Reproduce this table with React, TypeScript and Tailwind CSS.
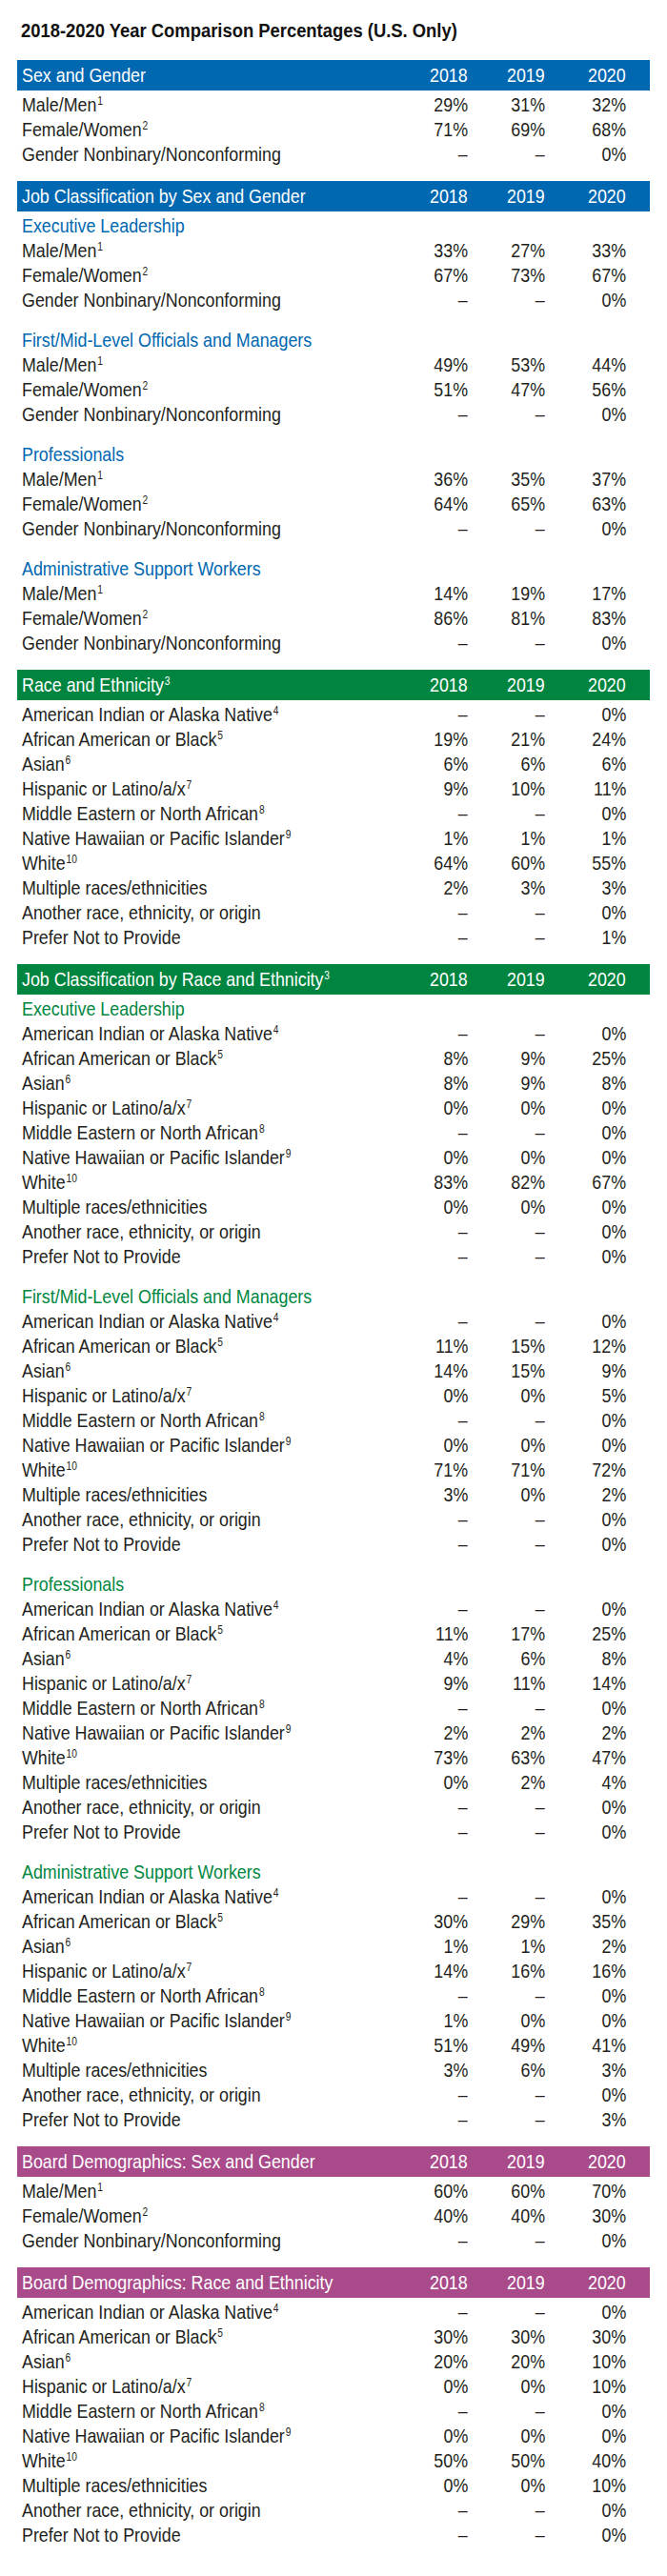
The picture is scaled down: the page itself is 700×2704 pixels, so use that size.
import React from "react";

type Row = { label: string; sup?: string; v: [string, string, string] };
type Group = { title?: string; rows: Row[] };
type Section = { title: string; sup?: string; color: "blue" | "green" | "magenta"; groups: Group[] };

const D = "–";

const sexRows = (a: [string, string, string], b: [string, string, string]): Row[] => [
  { label: "Male/Men", sup: "1", v: a },
  { label: "Female/Women", sup: "2", v: b },
  { label: "Gender Nonbinary/Nonconforming", v: [D, D, "0%"] },
];

const raceRows = (vals: [string, string, string][]): Row[] => {
  const labels: [string, string?][] = [
    ["American Indian or Alaska Native", "4"],
    ["African American or Black", "5"],
    ["Asian", "6"],
    ["Hispanic or Latino/a/x", "7"],
    ["Middle Eastern or North African", "8"],
    ["Native Hawaiian or Pacific Islander", "9"],
    ["White", "10"],
    ["Multiple races/ethnicities"],
    ["Another race, ethnicity, or origin"],
    ["Prefer Not to Provide"],
  ];
  return labels.map(([label, sup], i) => ({ label, sup, v: vals[i] }));
};

const sections: Section[] = [
  {
    title: "Sex and Gender",
    color: "blue",
    groups: [{ rows: sexRows(["29%", "31%", "32%"], ["71%", "69%", "68%"]) }],
  },
  {
    title: "Job Classification by Sex and Gender",
    color: "blue",
    groups: [
      { title: "Executive Leadership", rows: sexRows(["33%", "27%", "33%"], ["67%", "73%", "67%"]) },
      { title: "First/Mid-Level Officials and Managers", rows: sexRows(["49%", "53%", "44%"], ["51%", "47%", "56%"]) },
      { title: "Professionals", rows: sexRows(["36%", "35%", "37%"], ["64%", "65%", "63%"]) },
      { title: "Administrative Support Workers", rows: sexRows(["14%", "19%", "17%"], ["86%", "81%", "83%"]) },
    ],
  },
  {
    title: "Race and Ethnicity",
    sup: "3",
    color: "green",
    groups: [
      {
        rows: raceRows([
          [D, D, "0%"],
          ["19%", "21%", "24%"],
          ["6%", "6%", "6%"],
          ["9%", "10%", "11%"],
          [D, D, "0%"],
          ["1%", "1%", "1%"],
          ["64%", "60%", "55%"],
          ["2%", "3%", "3%"],
          [D, D, "0%"],
          [D, D, "1%"],
        ]),
      },
    ],
  },
  {
    title: "Job Classification by Race and Ethnicity",
    sup: "3",
    color: "green",
    groups: [
      {
        title: "Executive Leadership",
        rows: raceRows([
          [D, D, "0%"],
          ["8%", "9%", "25%"],
          ["8%", "9%", "8%"],
          ["0%", "0%", "0%"],
          [D, D, "0%"],
          ["0%", "0%", "0%"],
          ["83%", "82%", "67%"],
          ["0%", "0%", "0%"],
          [D, D, "0%"],
          [D, D, "0%"],
        ]),
      },
      {
        title: "First/Mid-Level Officials and Managers",
        rows: raceRows([
          [D, D, "0%"],
          ["11%", "15%", "12%"],
          ["14%", "15%", "9%"],
          ["0%", "0%", "5%"],
          [D, D, "0%"],
          ["0%", "0%", "0%"],
          ["71%", "71%", "72%"],
          ["3%", "0%", "2%"],
          [D, D, "0%"],
          [D, D, "0%"],
        ]),
      },
      {
        title: "Professionals",
        rows: raceRows([
          [D, D, "0%"],
          ["11%", "17%", "25%"],
          ["4%", "6%", "8%"],
          ["9%", "11%", "14%"],
          [D, D, "0%"],
          ["2%", "2%", "2%"],
          ["73%", "63%", "47%"],
          ["0%", "2%", "4%"],
          [D, D, "0%"],
          [D, D, "0%"],
        ]),
      },
      {
        title: "Administrative Support Workers",
        rows: raceRows([
          [D, D, "0%"],
          ["30%", "29%", "35%"],
          ["1%", "1%", "2%"],
          ["14%", "16%", "16%"],
          [D, D, "0%"],
          ["1%", "0%", "0%"],
          ["51%", "49%", "41%"],
          ["3%", "6%", "3%"],
          [D, D, "0%"],
          [D, D, "3%"],
        ]),
      },
    ],
  },
  {
    title: "Board Demographics: Sex and Gender",
    color: "magenta",
    groups: [{ rows: sexRows(["60%", "60%", "70%"], ["40%", "40%", "30%"]) }],
  },
  {
    title: "Board Demographics: Race and Ethnicity",
    color: "magenta",
    groups: [
      {
        rows: raceRows([
          [D, D, "0%"],
          ["30%", "30%", "30%"],
          ["20%", "20%", "10%"],
          ["0%", "0%", "10%"],
          [D, D, "0%"],
          ["0%", "0%", "0%"],
          ["50%", "50%", "40%"],
          ["0%", "0%", "10%"],
          [D, D, "0%"],
          [D, D, "0%"],
        ]),
      },
    ],
  },
];

const barBg: Record<Section["color"], string> = {
  blue: "bg-[#0067b1]",
  green: "bg-[#008540]",
  magenta: "bg-[#a94a8a]",
};
const subText: Record<Section["color"], string> = {
  blue: "text-[#0067b1]",
  green: "text-[#00873f]",
  magenta: "text-[#a94a8a]",
};

const grid = "grid grid-cols-[1fr_80px_81px_85px] pl-[5px] pr-[25px]";

function Sup({ n }: { n?: string }) {
  if (!n) return null;
  return <sup className="text-[12px] -top-[7px] ml-[1px]">{n}</sup>;
}

function L({ children }: { children: React.ReactNode }) {
  return <span className="inline-block whitespace-nowrap origin-left scale-x-[0.85]">{children}</span>;
}

function R({ children }: { children: React.ReactNode }) {
  return (
    <div className="text-right">
      <span className="inline-block whitespace-nowrap origin-right scale-x-[0.85]">{children}</span>
    </div>
  );
}

function SectionView({ s, first }: { s: Section; first: boolean }) {
  return (
    <div className={first ? "" : "mt-[15px]"}>
      <div className={`${barBg[s.color]} ${grid} h-[32px] items-center text-white leading-[26px]`}>
        <div>
          <L>
            {s.title}
            <Sup n={s.sup} />
          </L>
        </div>
        <R>2018</R>
        <R>2019</R>
        <R>2020</R>
      </div>
      <div className="pt-[2px]">
        {s.groups.map((g, gi) => (
          <div key={gi} className={gi > 0 ? "mt-[16px]" : ""}>
            {g.title && (
              <div className={`${subText[s.color]} h-[26px] leading-[26px] pl-[5px]`}>
                <L>{g.title}</L>
              </div>
            )}
            {g.rows.map((r, ri) => (
              <div key={ri} className={`${grid} h-[26px] leading-[26px] text-[#231f20]`}>
                <div>
                  <L>
                    {r.label}
                    <Sup n={r.sup} />
                  </L>
                </div>
                <R>{r.v[0]}</R>
                <R>{r.v[1]}</R>
                <R>{r.v[2]}</R>
              </div>
            ))}
          </div>
        ))}
      </div>
    </div>
  );
}

export default function App() {
  return (
    <div className="w-[700px] min-h-[2704px] bg-white px-[18px] pb-[29px] font-['Liberation_Sans',Arial,sans-serif] text-[21px]">
      <div className="pt-[19px] h-[63px] pl-[4px] text-[20px] leading-[26px] font-bold text-[#111]">
        <span className="inline-block whitespace-nowrap origin-left scale-x-[0.92]">
          2018-2020 Year Comparison Percentages (U.S. Only)
        </span>
      </div>
      {sections.map((s, i) => (
        <SectionView key={i} s={s} first={i === 0} />
      ))}
    </div>
  );
}
